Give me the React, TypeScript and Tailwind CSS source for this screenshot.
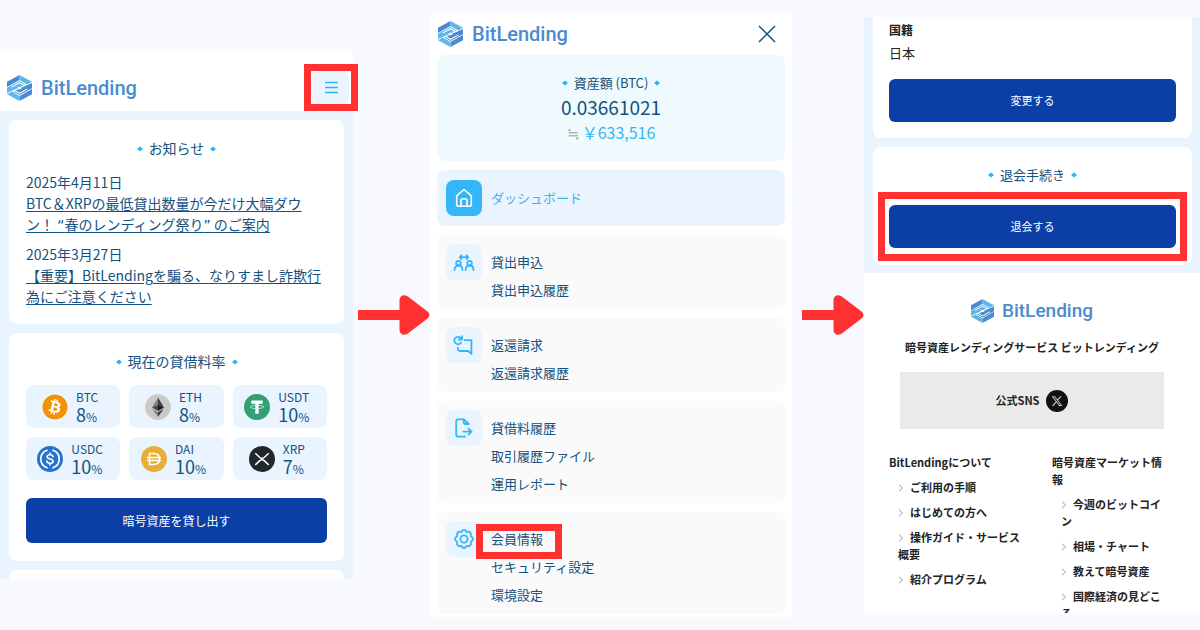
import type { ReactNode } from "react";
import { FaBitcoin, FaXTwitter } from "react-icons/fa6";

function LogoMark({ className }: { className: string }) {
  return (
    <svg viewBox="0 0 24 25" className={className} aria-hidden="true">
      <path d="M0 6.600 12 0v4.900L0 11.600Z" fill="#4a8ad0" />
      <path d="m12 0 12 6.600-4.600 2.500L12 4.900Z" fill="#5fb6ea" />
      <path d="M24 7.600v5.200L12 19.300 6.500 16.200l5.500-3.100Z" fill="#4a8ad0" />
      <g transform="rotate(180 12 12.5)">
        <path d="M0 6.600 12 0v4.900L0 11.600Z" fill="#4a8ad0" />
        <path d="m12 0 12 6.600-4.600 2.500L12 4.900Z" fill="#5fb6ea" />
        <path d="M24 7.600v5.200L12 19.300 6.500 16.200l5.500-3.100Z" fill="#5fb6ea" />
      </g>
      <path d="M4.300 11.700 12 7.400l4.300 2.400M19.700 13.300 12 17.600l-4.300-2.400" fill="none" stroke="#ffffff" strokeWidth="1" />
      <path d="m12 11.100 2.500 1.400-2.500 1.400-2.500-1.400Z" fill="#ffffff" />
    </svg>
  );
}

function Logo({ small = false }: { small?: boolean }) {
  return (
    <a href="#top" className={small ? "flex items-center gap-2" : "flex items-center gap-[9px]"}>
      <LogoMark className={small ? "h-6 w-[23px]" : "h-[26px] w-[25px]"} />
      <span
        className={
          small
            ? "font-[Roboto,sans-serif] text-[19px] leading-6 font-medium text-[#4b8bcf]"
            : "font-[Roboto,sans-serif] text-[20px] leading-6 font-medium text-[#4b8bcf]"
        }
      >
        BitLending
      </span>
    </a>
  );
}

function Spark() {
  return (
    <svg viewBox="0 0 6 6" className="size-[6px] shrink-0" aria-hidden="true">
      <path d="M3 .4 6 3 3 5.600 0 3Z" fill="#2eb4f6" />
    </svg>
  );
}

function Title({ children, small = false }: { children: ReactNode; small?: boolean }) {
  return (
    <h2
      className={
        small
          ? "flex items-center justify-center gap-[6px] text-[13px] leading-5"
          : "flex items-center justify-center gap-[6px] text-[14px] leading-[21px]"
      }
    >
      <Spark />
      {children}
      <Spark />
    </h2>
  );
}

function Arrow() {
  return (
    <div className="flex items-center" aria-hidden="true">
      <div className="h-[10px] flex-1 bg-[#ff3131]" />
      <svg viewBox="0 0 30 40" className="-ml-px h-10 w-[31px] shrink-0">
        <path d="M0 5.500C0 1 4 -1.300 8 1.300L28 16.500Q32 20 28 23.500L8 38.700C4 41.300 0 39 0 34.500Z" fill="#ff3131" />
      </svg>
    </div>
  );
}

const coin = "size-[26px] shrink-0";

const rates: { name: string; rate: number; icon: ReactNode }[] = [
  {
    name: "BTC",
    rate: 8,
    icon: (
      <span className="size-[26px] shrink-0 rounded-full bg-white">
        <FaBitcoin className="size-[26px] text-[#f39208]" />
      </span>
    ),
  },
  {
    name: "ETH",
    rate: 8,
    icon: (
      <svg viewBox="0 0 26 26" className={coin} aria-hidden="true">
        <circle cx="13" cy="13" r="12.600" fill="#c9c9c9" stroke="#dccdb2" strokeWidth=".8" />
        <path d="m13 3.500-6 9.900 6-2.700Z" fill="#828282" />
        <path d="m13 3.500 6 9.900-6-2.700Z" fill="#3f3f40" />
        <path d="m7 13.400 6 3.500v-6.200Z" fill="#4a4a4b" />
        <path d="m19 13.400-6 3.500v-6.200Z" fill="#1c1c1d" />
        <path d="m7.200 14.800 5.800 3.500v4.500Z" fill="#7c7c7c" />
        <path d="M18.800 14.800 13 18.300v4.500Z" fill="#3a3a3b" />
      </svg>
    ),
  },
  {
    name: "USDT",
    rate: 10,
    icon: (
      <svg viewBox="0 0 26 26" className={coin} aria-hidden="true">
        <circle cx="13" cy="13" r="13" fill="#339f74" />
        <path d="M7.300 6.500h11.400v3.300h-4v9.900h-3.400V9.800h-4Z" fill="#fff" />
        <ellipse cx="13" cy="13" rx="6.800" ry="1.600" fill="none" stroke="#d7efe5" strokeWidth=".8" />
      </svg>
    ),
  },
  {
    name: "USDC",
    rate: 10,
    icon: (
      <svg viewBox="0 0 26 26" className={coin} aria-hidden="true" fill="none" stroke="#fff" strokeLinecap="round">
        <circle cx="13" cy="13" r="13" fill="#2775ca" stroke="none" />
        <path d="M10 4.300a9.200 9.200 0 0 0 0 17.400M16 4.300a9.200 9.200 0 0 1 0 17.400" strokeWidth="1.700" />
        <path d="M16 10.700c-.3-1.400-1.500-1.900-3-1.900-1.700 0-2.900.7-2.900 2 0 3 6 1.400 6 4.400 0 1.300-1.300 2-3.100 2s-3-.7-3.200-2.100M13 7v1.800M13 17.200V19" strokeWidth="1.600" />
      </svg>
    ),
  },
  {
    name: "DAI",
    rate: 10,
    icon: (
      <svg viewBox="0 0 26 26" className={coin} aria-hidden="true" fill="none" stroke="#fff" strokeWidth="1.500">
        <circle cx="13" cy="13" r="13" fill="#e9ae3a" stroke="none" />
        <path d="M8.500 7.500h4c3.800 0 6 2.200 6 5.500s-2.200 5.500-6 5.500h-4ZM6 11.500h14M6 14.500h14" />
      </svg>
    ),
  },
  {
    name: "XRP",
    rate: 7,
    icon: (
      <svg viewBox="0 0 26 26" className={coin} aria-hidden="true" fill="none" stroke="#fff" strokeWidth="1.500">
        <circle cx="13" cy="13" r="13" fill="#20272d" stroke="none" />
        <path d="m6.300 7.300 4.200 4c1.500 1.300 3.500 1.300 5 0l4.200-4M6.300 18.900l4.200-4c1.500-1.300 3.500-1.300 5 0l4.200 4" />
      </svg>
    ),
  },
];

const quote = "font-['DejaVu_Sans',sans-serif] leading-none";

const news = [
  {
    date: "2025年4月11日",
    text: (
      <>
        BTC＆XRPの最低貸出数量が今だけ大幅ダウン！ <span className={quote}>“</span>
        春のレンディング祭り<span className={quote}>”</span> のご案内
      </>
    ),
  },
  { date: "2025年3月27日", text: <>【重要】BitLendingを騙る、なりすまし詐欺行為にご注意ください</> },
];

function HomeScreen() {
  return (
    <section className="bg-[#e9f4fe]">
      <header className="flex items-center justify-between bg-white pt-5 pr-1 pb-[7px] pl-[7px]">
        <Logo />
        <div className="relative">
          <button
            type="button"
            aria-label="メニュー"
            className="flex h-[33px] w-9 items-center justify-center rounded-md bg-[#e9f4fe]"
          >
            <svg viewBox="0 0 13 13" className="size-[13px]" stroke="#2eb4f6" strokeWidth="1.500" aria-hidden="true">
              <path d="M0 1.500h13M0 6.500h13M0 11.500h13" />
            </svg>
          </button>
          <div className="pointer-events-none absolute -inset-x-[9px] -inset-y-[7px] border-[7px] border-[#ff3131]" />
        </div>
      </header>
      <div className="flex flex-col gap-[9px] px-[9px] pt-[9px]">
        <div className="rounded-lg bg-white px-[17px] pt-[18px] pb-[17px]">
          <Title>お知らせ</Title>
          <ul className="mt-[13px] flex flex-col gap-[9px] text-[14px] leading-[21px]">
            {news.map((n) => (
              <li key={n.date}>
                <p>{n.date}</p>
                <a href="#news" className="underline underline-offset-2">
                  {n.text}
                </a>
              </li>
            ))}
          </ul>
        </div>
        <div className="rounded-lg bg-white px-[17px] py-[18px]">
          <Title>現在の貸借料率</Title>
          <ul className="mt-[13px] grid grid-cols-3 gap-[9px]">
            {rates.map((r) => (
              <li key={r.name} className="flex h-[43px] items-center justify-center gap-2 rounded-lg bg-[#e9f4fe] pr-[6px]">
                {r.icon}
                <div className="pt-[2px]">
                  <p className="text-[12px] leading-4">{r.name}</p>
                  <p className="text-[18px] leading-[18px]">
                    {r.rate}
                    <span className="text-[12px]">%</span>
                  </p>
                </div>
              </li>
            ))}
          </ul>
          <button type="button" className="mt-[18px] h-[45px] w-full rounded-md bg-[#0b3fa6] text-[12px] text-white">
            暗号資産を貸し出す
          </button>
        </div>
        <div className="h-[9px] rounded-t-lg bg-white" />
      </div>
    </section>
  );
}

const menu: { icon: ReactNode; items: string[]; marked?: boolean }[] = [
  {
    items: ["貸出申込", "貸出申込履歴"],
    icon: (
      <>
        <circle cx="5.500" cy="12.200" r="2.300" />
        <circle cx="16.500" cy="12.200" r="2.300" />
        <path d="M1.600 19v-.7c0-2.200 1.600-3.800 3.900-3.800s3.900 1.600 3.900 3.800v.7M12.600 19v-.7c0-2.200 1.600-3.800 3.900-3.800s3.900 1.600 3.900 3.800v.7" />
        <path d="M7 6.200h8M8.500 4.400 6.700 6.200l1.800 1.800M13.500 4.400l1.800 1.800-1.800 1.800" />
      </>
    ),
  },
  {
    items: ["返還請求", "返還請求履歴"],
    icon: (
      <>
        <path d="M8 8.700A3.700 3.700 0 1 1 7.600 3.900M9 2.200v3.300H5.700" />
        <path d="M11.800 6.200h6.600v13.600l-3.200-2.800H7c-1.300 0-2-.7-2-2v-1.400" />
      </>
    ),
  },
  {
    items: ["貸借料履歴", "取引履歴ファイル", "運用レポート"],
    icon: (
      <>
        <path d="M10.500 2.300H5.300c-1.300 0-2.100.8-2.100 2.200v13c0 1.400.8 2.200 2.100 2.200h6.900" />
        <path d="M10.700 2.300v3.200c0 1 .6 1.500 1.500 1.500h3.600Z" />
        <path d="M10.300 14.600h8.300M15.500 11.600l3.100 3-3.100 3" />
      </>
    ),
  },
  {
    items: ["会員情報", "セキュリティ設定", "環境設定"],
    marked: true,
    icon: (
      <>
        <circle cx="11" cy="11" r="3.600" />
        <path d="M8.700 3.700a2.400 2.400 0 0 1 4.600 0 2.400 2.400 0 0 0 1.100.5 2.400 2.400 0 0 1 3.300 3.300 2.400 2.400 0 0 0 .5 1.200 2.400 2.400 0 0 1 0 4.600 2.400 2.400 0 0 0-.5 1.200 2.400 2.400 0 0 1-3.300 3.300 2.400 2.400 0 0 0-1.100.5 2.400 2.400 0 0 1-4.600 0 2.400 2.400 0 0 0-1.100-.5 2.400 2.400 0 0 1-3.300-3.300 2.400 2.400 0 0 0-.5-1.200 2.400 2.400 0 0 1 0-4.600 2.400 2.400 0 0 0 .5-1.200 2.400 2.400 0 0 1 3.300-3.300 2.400 2.400 0 0 0 1.100-.5Z" />
      </>
    ),
  },
];

function MenuScreen() {
  return (
    <section className="bg-white px-[7px] pb-[3px]">
      <header className="flex h-[42px] items-center justify-between pr-[9px] pl-px">
        <Logo />
        <button type="button" aria-label="閉じる">
          <svg viewBox="0 0 18 18" className="size-[18px]" fill="none" stroke="#14527f" strokeWidth="1.500" aria-hidden="true">
            <path d="m1 1 16 16M17 1 1 17" />
          </svg>
        </button>
      </header>
      <div className="flex flex-col gap-[9px]">
        <div className="rounded-lg bg-[#eefafd] py-[18px] text-center">
          <Title small>資産額 (BTC)</Title>
          <p className="text-[19px] leading-7">0.03661021</p>
          <p className="flex justify-center gap-[2px] text-[16px] leading-[22px] text-[#3ab3f3]">
            <span className="text-[#777777]">≒</span>
            <span>￥633,516</span>
          </p>
        </div>
        <a href="#dashboard" className="flex h-14 items-center gap-[9px] rounded-lg bg-[#e9f4fe] px-[9px] text-[13px] text-[#3ab3f3]">
          <span className="flex size-9 items-center justify-center rounded-lg bg-[#34b6f8]">
            <svg viewBox="0 0 22 22" className="size-[22px]" fill="none" stroke="#fff" strokeWidth="1.600" strokeLinejoin="round" aria-hidden="true">
              <path d="M3.700 8.800 11 2.500l7.300 6.300v8.500c0 1.300-.8 2-2 2H5.700c-1.200 0-2-.7-2-2Z" />
              <path d="M8 19.300v-5.500c0-1.200.7-1.900 1.900-1.900h2.200c1.200 0 1.900.7 1.900 1.900v5.500" />
            </svg>
          </span>
          ダッシュボード
        </a>
        {menu.map((group) => (
          <div key={group.items[0]} className="flex items-start gap-[9px] rounded-lg bg-[#fafafa] px-[9px] pt-[9px] pb-[5px]">
            <span className="flex size-9 items-center justify-center rounded-lg bg-[#e9f4fe]">
              <svg
                viewBox="0 0 22 22"
                className="size-[22px]"
                fill="none"
                stroke="#34b6f8"
                strokeWidth="1.800"
                strokeLinecap="round"
                strokeLinejoin="round"
                aria-hidden="true"
              >
                {group.icon}
              </svg>
            </span>
            <ul className="mt-1 text-[13px] leading-7">
              {group.items.map((item, i) => (
                <li key={item}>
                  <a href="#menu" className="relative block w-fit">
                    {item}
                    {group.marked && i === 0 && (
                      <span className="pointer-events-none absolute -top-px -right-[19px] -bottom-[6px] -left-[15px] border-[7px] border-[#ff3131]" />
                    )}
                  </a>
                </li>
              ))}
            </ul>
          </div>
        ))}
      </div>
    </section>
  );
}

const footerColumns = [
  { heading: "BitLendingについて", links: ["ご利用の手順", "はじめての方へ", "操作ガイド・サービス概要", "紹介プログラム"] },
  { heading: "暗号資産マーケット情報", links: ["今週のビットコイン", "相場・チャート", "教えて暗号資産", "国際経済の見どころ"] },
];

const blueButton = "h-[43px] w-full rounded-md bg-[#0b3fa6] text-[11px] text-white";

function AccountScreen() {
  return (
    <section className="max-h-[596px] overflow-hidden bg-white">
      <div className="flex flex-col gap-[9px] bg-[#e9f4fe] pr-2 pb-2 pl-[9px]">
        <div className="rounded-b-lg bg-white px-4 pt-1 pb-4 text-[#222222]">
          <dl>
            <dt className="text-[12px] leading-[18px] font-bold">国籍</dt>
            <dd className="mt-1 text-[13px] leading-5">日本</dd>
          </dl>
          <button type="button" className={`mt-4 ${blueButton}`}>
            変更する
          </button>
        </div>
        <div className="rounded-lg bg-white px-4 pt-[18px] pb-[17px]">
          <Title small>退会手続き</Title>
          <div className="relative mt-5">
            <button type="button" className={`block ${blueButton}`}>
              退会する
            </button>
            <div className="pointer-events-none absolute -inset-x-[11px] -inset-y-[13px] border-[7px] border-[#ff3131]" />
          </div>
        </div>
      </div>
      <footer className="pt-[26px] text-[11px] leading-[17px] font-bold text-[#222222]">
        <div className="flex justify-center">
          <Logo small />
        </div>
        <p className="mt-4 text-center">暗号資産レンディングサービス ビットレンディング</p>
        <div className="mx-9 mt-4 flex h-[57px] items-center justify-center gap-[7px] bg-[#eaeaea]">
          公式SNS
          <a href="#x" aria-label="X" className="flex size-[22px] items-center justify-center rounded-full bg-[#111111]">
            <FaXTwitter className="size-3 text-[#bdbdbd]" />
          </a>
        </div>
        <div className="mt-[25px] grid grid-cols-[139fr_119fr] gap-6 pr-[29px] pl-[25px]">
          {footerColumns.map((col) => (
            <div key={col.heading}>
              <h3>{col.heading}</h3>
              <ul className="mt-2 flex flex-col gap-2 pl-[9px]">
                {col.links.map((link) => (
                  <li key={link}>
                    <svg viewBox="0 0 8 8" className="mr-1 inline size-2 align-baseline" fill="none" stroke="#c4c4c4" strokeWidth="1.200" aria-hidden="true">
                      <path d="m1 .8 3.500 3.200L1 7.200" />
                    </svg>
                    <a href="#footer">{link}</a>
                  </li>
                ))}
              </ul>
            </div>
          ))}
        </div>
      </footer>
    </section>
  );
}

export default function App() {
  return (
    <main
      lang="ja"
      className="grid min-h-screen grid-cols-[353fr_5fr_72fr_362fr_10fr_62fr_336fr] items-center bg-[#f8f9ff] font-['Noto_Sans_CJK_JP',sans-serif] text-[#14527f]"
    >
      <HomeScreen />
      <span />
      <Arrow />
      <MenuScreen />
      <span />
      <Arrow />
      <AccountScreen />
    </main>
  );
}
